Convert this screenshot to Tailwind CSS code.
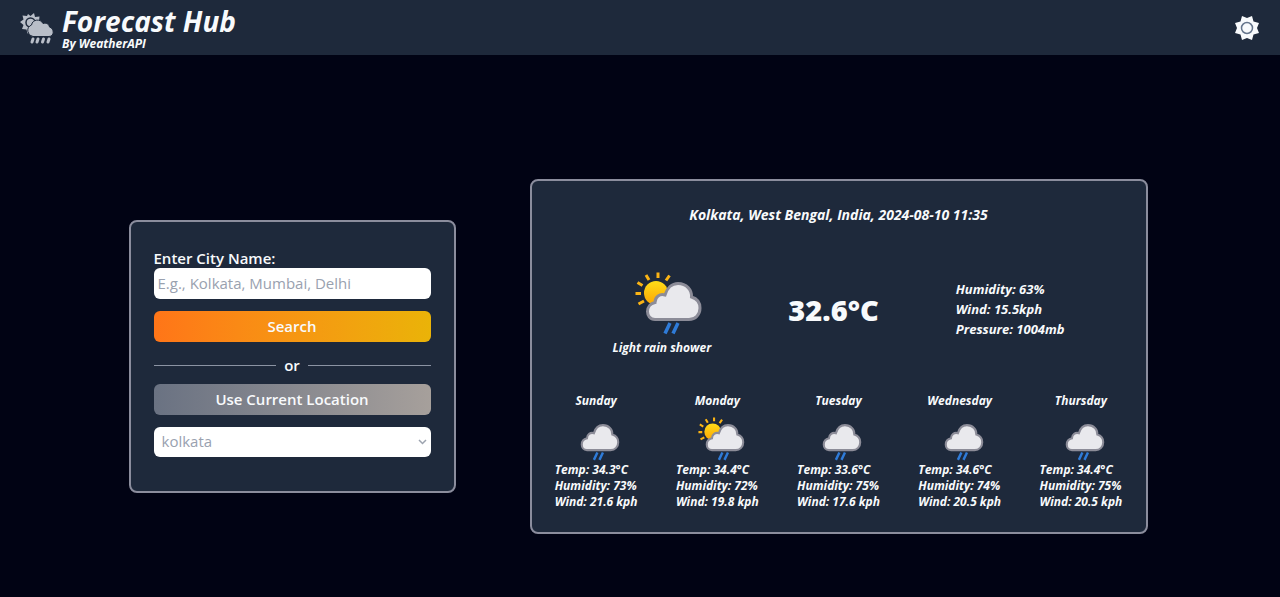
<!DOCTYPE html>
<html lang="en">
<head>
<meta charset="utf-8">
<meta name="viewport" content="width=device-width, initial-scale=1">
<title>Forecast Hub</title>
<script src="https://cdn.jsdelivr.net/npm/@tailwindcss/browser@4"></script>
</head>
<body class="flex min-h-screen flex-col bg-[#010314] font-['Open_Sans','Noto_Sans',sans-serif] font-semibold text-slate-50">
<svg class="absolute size-0" aria-hidden="true">
  <defs>
    <linearGradient id="sunFill" x1="0" y1="0" x2="0" y2="1"><stop offset="0" stop-color="#ffdc18"/><stop offset="1" stop-color="#fba504"/></linearGradient>
    <symbol id="sun" viewBox="0 0 72 68">
      <circle cx="24" cy="25" r="12" fill="url(#sunFill)"/>
      <g stroke="#fbb415" stroke-width="3"><path d="M26 10V4.500M34 12.500l3.500-5M17 12l-3-5M10.500 17.500l-5-3M9 25.500H3.500M12 33l-5.500 3"/></g>
    </symbol>
    <symbol id="rain" viewBox="0 0 72 68">
      <path d="M23 51.500c-5 0-7.500-4-7.500-8 0-4.500 3-8 7.500-9 0-6 5-9 10-7.500 2-7 7-11.500 13-11.500 8.500 0 14 6.500 13.500 13.500 5 1.500 8.500 5.500 8.500 11 0 6.500-4.500 11.500-11 11.500Z" fill="#e9e9ed" stroke="#8c8c98" stroke-width="3"/>
      <path d="m38 55-5 10.500M46 55l-5 10.500" stroke="#2f7bd8" stroke-width="3.500"/>
    </symbol>
  </defs>
</svg>

<header class="flex h-[55px] shrink-0 items-center justify-between bg-[#1e293b] px-5">
  <div class="flex items-center gap-2">
    <svg class="h-[34px] w-[34px]" viewBox="0 0 34 34" aria-hidden="true">
      <path d="m8 3 2.500 2L14 2l1 4 4.500-.5-.5 4.500 2 2-10 9-3.500 1.500-1-4-4.500-.5 1.500-4-3.500-3 3.500-2.500-1-4 4.500.5Z" fill="#b9bec8"/>
      <circle cx="10.500" cy="11.500" r="4.500" fill="none" stroke="#1e293b" stroke-width="1.500"/>
      <path d="M13 25.500a6 6 0 0 1-1.500-11.500c1-6 9-6.500 11.500-1.500 4-1 6 1 6.500 3.500 5 1.500 5 9.500-.5 9.500Z" fill="#b9bec8" stroke="#1e293b" stroke-width="1"/>
      <path d="m13 28-1 3M18 28l-1 3M23.500 28l-1 3M29 28l-1 3" stroke="#b9bec8" stroke-width="3" stroke-linecap="round"/>
    </svg>
    <div class="italic">
      <h1 class="text-[28px] leading-[32px] font-bold">Forecast Hub</h1>
      <p class="text-[12px] leading-[14px] font-bold">By WeatherAPI</p>
    </div>
  </div>
  <button type="button" aria-label="Toggle theme">
    <svg class="h-[26px] w-[26px]" viewBox="0 0 26 26" aria-hidden="true">
      <path d="m8 1 5 2 5-2 1.500 5.500L25 8l-2 5 2 5-5.500 1.500L18 25l-5-2-5 2-1.500-5.500L1 18l2-5-2-5 5.500-1.500Z" fill="#f8fafc"/>
      <circle cx="13" cy="13" r="5.500" fill="none" stroke="#64748b" stroke-width="1.500"/>
    </svg>
  </button>
</header>

<main class="flex grow flex-wrap items-center justify-center gap-[74px] pt-[60px] pr-1">
  <form class="w-full max-w-[327px] rounded-lg border-2 border-[#8b8d9d] bg-[#1e293b] px-[23px] pt-[26px] pb-[34px]">
    <label for="city" class="block text-[15px] leading-[20px]">Enter City Name:</label>
    <input id="city" type="text" placeholder="E.g., Kolkata, Mumbai, Delhi" class="block h-[31px] w-full rounded-md bg-white px-1 text-[15px] font-normal text-gray-800 placeholder:text-gray-400">
    <button type="button" class="mt-3 block h-[31px] w-full rounded-md bg-linear-to-r from-[#ff7518] to-[#eab308] text-[15px]">Search</button>
    <div class="flex h-[42px] items-center gap-2 pt-1.5 text-[15px] before:h-px before:flex-1 before:bg-[#8b93a3] after:h-px after:flex-1 after:bg-[#8b93a3]">or</div>
    <button type="button" class="block h-[31px] w-full rounded-md bg-linear-to-r from-gray-500 to-stone-400 text-[15px]">Use Current Location</button>
    <div class="relative mt-3">
      <select aria-label="Recent cities" class="block h-[30px] w-full appearance-none rounded-md bg-white px-2 text-[15px] font-normal text-gray-400"><option>kolkata</option></select>
      <svg class="pointer-events-none absolute top-[11px] right-1 h-2 w-[9px]" viewBox="0 0 9 8" fill="none" stroke="#9ca3af" stroke-width="1.500" aria-hidden="true"><path d="m1 2 3.500 3.500L8 2"/></svg>
    </div>
  </form>

  <section class="w-full max-w-[618px] rounded-lg border-2 border-[#8b8d9d] bg-[#1e293b] px-1 pt-[22px] pb-[22px] italic">
    <h2 class="text-center text-[14px] leading-[24px] font-bold">Kolkata, West Bengal, India, 2024-08-10 11:35</h2>
    <div class="mt-[41px] flex items-center justify-evenly">
      <div class="flex flex-col items-center">
        <div class="pl-3"><svg class="h-[68px] w-[72px]" aria-hidden="true"><use href="#sun"/><use href="#rain"/></svg></div>
        <p class="mt-1 text-[12px] leading-[16px] font-bold">Light rain shower</p>
      </div>
      <p class="pb-1 text-[29px] leading-[32px] font-extrabold not-italic">32.6°C</p>
      <div class="pb-1.5 text-[13px] leading-[20px] font-bold"><p>Humidity: 63%</p><p>Wind: 15.5kph</p><p>Pressure: 1004mb</p></div>
    </div>
    <ul class="mt-[37px] grid grid-cols-5 text-[12px] leading-[16px] font-bold">
      <li class="flex flex-col items-center"><h3>Sunday</h3><svg class="mt-[5px] h-[48px] w-[50px]" aria-hidden="true"><use href="#rain"/></svg><div><p>Temp: 34.3°C</p><p>Humidity: 73%</p><p>Wind: 21.6 kph</p></div></li>
      <li class="flex flex-col items-center"><h3>Monday</h3><div class="mt-[5px] pl-2"><svg class="h-[48px] w-[50px]" aria-hidden="true"><use href="#sun"/><use href="#rain"/></svg></div><div><p>Temp: 34.4°C</p><p>Humidity: 72%</p><p>Wind: 19.8 kph</p></div></li>
      <li class="flex flex-col items-center"><h3>Tuesday</h3><svg class="mt-[5px] h-[48px] w-[50px]" aria-hidden="true"><use href="#rain"/></svg><div><p>Temp: 33.6°C</p><p>Humidity: 75%</p><p>Wind: 17.6 kph</p></div></li>
      <li class="flex flex-col items-center"><h3>Wednesday</h3><svg class="mt-[5px] h-[48px] w-[50px]" aria-hidden="true"><use href="#rain"/></svg><div><p>Temp: 34.6°C</p><p>Humidity: 74%</p><p>Wind: 20.5 kph</p></div></li>
      <li class="flex flex-col items-center"><h3>Thursday</h3><svg class="mt-[5px] h-[48px] w-[50px]" aria-hidden="true"><use href="#rain"/></svg><div><p>Temp: 34.4°C</p><p>Humidity: 75%</p><p>Wind: 20.5 kph</p></div></li>
    </ul>
  </section>
</main>
</body>
</html>
